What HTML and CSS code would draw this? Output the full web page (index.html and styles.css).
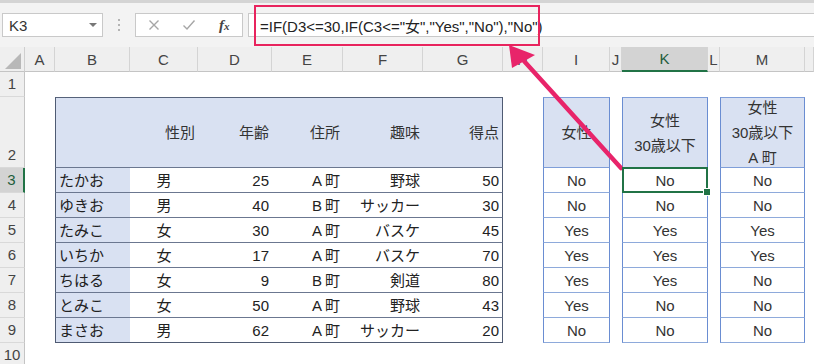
FILE: index.html
```html
<!DOCTYPE html>
<html lang="ja">
<head>
<meta charset="utf-8">
<title>K3</title>
<link rel="stylesheet" href="styles.css">
</head>
<body>
<div class="app">
  <div class="topstrip"></div>
  <div class="toolbar">
    <div class="namebox"><span>K3</span><span class="caret"></span></div>
    <div class="dots"><i></i><i></i><i></i></div>
    <div class="fxbox">
      <span class="btn"><svg width="12" height="12" viewBox="0 0 12 12"><path d="M1.5 1.5 L10.5 10.5 M10.5 1.5 L1.5 10.5" stroke="#a6a6a6" stroke-width="1.4" fill="none"/></svg></span>
      <span class="btn"><svg width="14" height="12" viewBox="0 0 14 12"><path d="M1.5 6.5 L5 10 L12.5 1.5" stroke="#a6a6a6" stroke-width="1.4" fill="none"/></svg></span>
      <span class="btn fx"><i>f</i><i class="sub">x</i></span>
    </div>
    <div class="formula">=IF(D3&lt;=30,IF(C3&lt;="女","Yes","No"),"No")</div>
  </div>
  <div class="callout"></div>

  <div class="sheet">
    <!-- column headers -->
    <div class="corner"><span class="tri"></span></div>
    <div class="ch">A</div><div class="ch">B</div><div class="ch">C</div><div class="ch">D</div>
    <div class="ch">E</div><div class="ch">F</div><div class="ch">G</div><div class="ch">H</div>
    <div class="ch">I</div><div class="ch">J</div><div class="ch sel">K</div><div class="ch">L</div>
    <div class="ch">M</div><div class="ch"></div>

    <!-- row 1 -->
    <div class="rh">1</div>
    <div></div><div></div><div></div><div></div><div></div><div></div><div></div>
    <div></div><div></div><div></div><div></div><div></div><div></div><div></div>

    <!-- row 2 -->
    <div class="rh">2</div>
    <div></div>
    <div class="th tl"></div>
    <div class="th">性別</div>
    <div class="th">年齢</div>
    <div class="th">住所</div>
    <div class="th">趣味</div>
    <div class="th tr">得点</div>
    <div></div>
    <div class="rth">女性</div>
    <div></div>
    <div class="rth">女性<br>30歳以下</div>
    <div></div>
    <div class="rth">女性<br>30歳以下<br>A 町</div>
    <div></div>

    <!-- row 3 -->
    <div class="rh sel">3</div>
    <div></div>
    <div class="d nm tl">たかお</div><div class="d c">男</div><div class="d r">25</div><div class="d r town">A町</div><div class="d r">野球</div><div class="d r tr">50</div>
    <div></div>
    <div class="rd">No</div><div></div><div class="rd active">No</div><div></div><div class="rd">No</div><div></div>

    <!-- row 4 -->
    <div class="rh">4</div>
    <div></div>
    <div class="d nm tl">ゆきお</div><div class="d c">男</div><div class="d r">40</div><div class="d r town">B町</div><div class="d r">サッカー</div><div class="d r tr">30</div>
    <div></div>
    <div class="rd">No</div><div></div><div class="rd">No</div><div></div><div class="rd">No</div><div></div>

    <!-- row 5 -->
    <div class="rh">5</div>
    <div></div>
    <div class="d nm tl">たみこ</div><div class="d c">女</div><div class="d r">30</div><div class="d r town">A町</div><div class="d r">バスケ</div><div class="d r tr">45</div>
    <div></div>
    <div class="rd">Yes</div><div></div><div class="rd">Yes</div><div></div><div class="rd">Yes</div><div></div>

    <!-- row 6 -->
    <div class="rh">6</div>
    <div></div>
    <div class="d nm tl">いちか</div><div class="d c">女</div><div class="d r">17</div><div class="d r town">A町</div><div class="d r">バスケ</div><div class="d r tr">70</div>
    <div></div>
    <div class="rd">Yes</div><div></div><div class="rd">Yes</div><div></div><div class="rd">Yes</div><div></div>

    <!-- row 7 -->
    <div class="rh">7</div>
    <div></div>
    <div class="d nm tl">ちはる</div><div class="d c">女</div><div class="d r">9</div><div class="d r town">B町</div><div class="d r">剣道</div><div class="d r tr">80</div>
    <div></div>
    <div class="rd">Yes</div><div></div><div class="rd">Yes</div><div></div><div class="rd">No</div><div></div>

    <!-- row 8 -->
    <div class="rh">8</div>
    <div></div>
    <div class="d nm tl">とみこ</div><div class="d c">女</div><div class="d r">50</div><div class="d r town">A町</div><div class="d r">野球</div><div class="d r tr">43</div>
    <div></div>
    <div class="rd">Yes</div><div></div><div class="rd">No</div><div></div><div class="rd">No</div><div></div>

    <!-- row 9 -->
    <div class="rh">9</div>
    <div></div>
    <div class="d nm tl last">まさお</div><div class="d c last">男</div><div class="d r last">62</div><div class="d r town last">A町</div><div class="d r last">サッカー</div><div class="d r tr last">20</div>
    <div></div>
    <div class="rd">No</div><div></div><div class="rd">No</div><div></div><div class="rd">No</div><div></div>

    <!-- row 10 -->
    <div class="rh">10</div>
    <div></div><div></div><div></div><div></div><div></div><div></div><div></div>
    <div></div><div></div><div></div><div></div><div></div><div></div><div></div>
  </div>

  <svg class="arrow" width="814" height="364" viewBox="0 0 814 364">
    <line x1="524" y1="61" x2="621" y2="168" stroke="#e8246a" stroke-width="4.5" stroke-linecap="round"/>
    <polygon points="509,45 512,68 535,55" fill="#e8246a"/>
  </svg>
</div>
</body>
</html>
```

FILE: styles.css
```css
* { box-sizing: border-box; }
html, body { margin: 0; padding: 0; background: #fff; }
body { width: 814px; height: 364px; overflow: hidden; }

.app {
  position: relative;
  width: 814px;
  height: 364px;
  overflow: hidden;
  font-family: "Liberation Sans", "Noto Sans CJK JP", sans-serif;
  color: #222;
  background: #fff;
}

.topstrip { height: 3px; background: #d4d4d4; }

.toolbar {
  height: 44px;
  background: #f3f3f3;
  display: flex;
  align-items: flex-start;
  padding: 10px 0 0 2px;
}

.namebox {
  width: 101px;
  height: 24px;
  border: 1px solid #c9c9c9;
  background: #fff;
  display: flex;
  align-items: center;
  justify-content: space-between;
  padding: 0 5px 0 6px;
  font-size: 15px;
  color: #333;
}
.caret {
  width: 0; height: 0;
  border-left: 4px solid transparent;
  border-right: 4px solid transparent;
  border-top: 4px solid #777;
}

.dots {
  width: 32px;
  height: 24px;
  display: flex;
  flex-direction: column;
  align-items: center;
  justify-content: center;
  gap: 3px;
}
.dots i { width: 2px; height: 2px; background: #b4b4b4; display: block; }

.fxbox {
  width: 108px;
  height: 24px;
  border: 1px solid #c9c9c9;
  background: #fff;
  display: flex;
  align-items: center;
}
.btn {
  flex: 1;
  display: flex;
  align-items: center;
  justify-content: center;
}
.fx {
  font-family: "Liberation Serif", serif;
  font-style: italic;
  color: #444;
  font-size: 15px;
  align-items: baseline;
}
.fx i { font-style: italic; font-weight: bold; }
.fx .sub { font-size: 11px; }

.formula {
  margin-left: 5px;
  flex: 1;
  height: 24px;
  border: 1px solid #c9c9c9;
  border-right: none;
  background: #fff;
  font-size: 15px;
  color: #222;
  padding-left: 11px;
  display: flex;
  align-items: center;
  white-space: nowrap;
}

.callout {
  position: absolute;
  left: 254px;
  top: 5px;
  width: 286px;
  height: 41px;
  border: 2px solid #e8245e;
}

.sheet {
  display: grid;
  grid-template-columns: 25px 30px 75px 68px 74px 71px 80px 80px 40px 67px 12px 86px 12px 85px 1fr;
  grid-template-rows: 25px 25px 71px repeat(7, 25px) 25px;
  font-size: 15px;
}
.sheet > div {
  display: flex;
  align-items: flex-end;
  line-height: 21px;
  padding-bottom: 1px;
  white-space: nowrap;
}

.corner {
  background: #efefef;
  border-right: 1px solid #cfcfcf;
  border-bottom: 1px solid #c4c4c4;
  position: relative;
}
.tri {
  position: absolute;
  left: 5px;
  top: 6px;
  width: 16px;
  height: 16px;
  background: #b8b8b8;
  clip-path: polygon(100% 0, 100% 100%, 0 100%);
}

.sheet > .ch {
  background: #efefef;
  border-right: 1px solid #d4d4d4;
  border-bottom: 1px solid #c4c4c4;
  justify-content: center;
  align-items: center;
  padding: 0;
  color: #444;
  font-size: 15px;
}
.sheet > .ch.sel {
  background: #d3d3d3;
  border-bottom: 2px solid #217346;
  color: #1f5d3c;
}

.sheet > .rh {
  background: #efefef;
  border-right: 1px solid #c4c4c4;
  border-bottom: 1px solid #d9d9d9;
  justify-content: center;
  color: #444;
  padding-bottom: 2px;
}
.sheet > .rh.sel {
  background: #d3d3d3;
  border-right: 2px solid #217346;
  color: #1f5d3c;
}

/* left table */
.sheet > .th {
  background: #d9e1f2;
  border-top: 1px solid #56627a;
  border-bottom: 1px solid #6b7790;
  justify-content: flex-end;
  align-items: center;
  padding: 0 3px 0 0;
  color: #333;
}
.sheet > .d {
  border-bottom: 1px solid #6b7790;
  padding-left: 3px;
  padding-right: 3px;
}
.sheet > .tl { border-left: 1px solid #4f5b73; }
.sheet > .tr { border-right: 1px solid #4f5b73; }
.sheet > .last { border-bottom-color: #4f5b73; }
.sheet > .nm { background: #d9e1f2; }
.sheet > .c { justify-content: center; }
.sheet > .r { justify-content: flex-end; }
.sheet > .town { letter-spacing: 3px; padding-right: 0; }

/* right tables */
.sheet > .rth {
  background: #d9e1f2;
  border: 1px solid #7f9ed9;
  border-left-color: #6a8dd2;
  border-right-color: #6a8dd2;
  justify-content: center;
  align-items: center;
  text-align: center;
  line-height: 25px;
  padding: 0;
  color: #333;
}
.sheet > .rd {
  border-left: 1px solid #6a8dd2;
  border-right: 1px solid #6a8dd2;
  border-bottom: 1px solid #8eaadb;
  justify-content: center;
  color: #333;
}
.sheet > .active { position: relative; }
.active::after {
  content: "";
  position: absolute;
  left: -1px;
  top: -1px;
  right: -1px;
  bottom: -1px;
  border: 2px solid #217346;
  z-index: 2;
}
.active::before {
  content: "";
  position: absolute;
  right: -4px;
  bottom: -4px;
  width: 6px;
  height: 6px;
  background: #217346;
  border: 1px solid #fff;
  z-index: 3;
}

.arrow {
  position: absolute;
  left: 0;
  top: 0;
  pointer-events: none;
}
```
